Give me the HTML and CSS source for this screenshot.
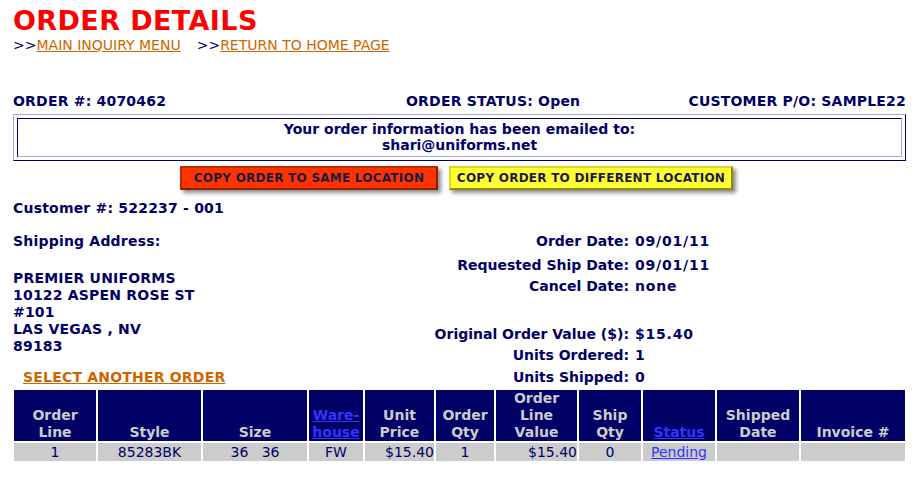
FILE: index.html
```html
<!DOCTYPE html>
<html>
<head>
<meta charset="utf-8">
<title>Order Details</title>
<link rel="stylesheet" href="styles.css">
</head>
<body>
<div class="page">
  <h1 class="title">ORDER DETAILS</h1>
  <div class="nav">&gt;&gt;<a href="#" class="navlink">MAIN INQUIRY MENU</a><span class="navgap"></span>&gt;&gt;<a href="#" class="navlink">RETURN TO HOME PAGE</a></div>

  <div class="header-row">
    <div class="h-order">ORDER #: 4070462</div>
    <div class="h-status">ORDER STATUS: Open</div>
    <div class="h-po">CUSTOMER P/O: SAMPLE22</div>
  </div>

  <div class="email-box">
    <div class="email-inner">Your order information has been emailed to:<br>shari@uniforms.net</div>
  </div>

  <div class="buttons">
    <span class="btn btn-red">COPY ORDER TO SAME LOCATION</span>
    <span class="btn btn-yellow">COPY ORDER TO DIFFERENT LOCATION</span>
  </div>

  <div class="info">
    <div class="left">
      <div class="customer">Customer #: 522237 - 001</div>
      <div class="ship-label">Shipping Address:</div>
      <div class="address">PREMIER UNIFORMS<br>10122 ASPEN ROSE ST<br>#101<br>LAS VEGAS , NV<br>89183</div>
      <a href="#" class="select-link">SELECT ANOTHER ORDER</a>
    </div>
    <div class="right">
      <div class="kv r1"><span class="k">Order Date:</span><span class="v">09/01/11</span></div>
      <div class="kv r2"><span class="k">Requested Ship Date:</span><span class="v">09/01/11</span></div>
      <div class="kv r3"><span class="k">Cancel Date:</span><span class="v">none</span></div>
      <div class="kv r4"><span class="k">Original Order Value ($):</span><span class="v">$15.40</span></div>
      <div class="kv r5"><span class="k">Units Ordered:</span><span class="v">1</span></div>
      <div class="kv r6"><span class="k">Units Shipped:</span><span class="v">0</span></div>
    </div>
  </div>

  <table class="lines">
    <colgroup>
      <col class="c1"><col class="c2"><col class="c3"><col class="c4"><col class="c5"><col class="c6"><col class="c7"><col class="c8"><col class="c9"><col class="c10"><col class="c11">
    </colgroup>
    <thead>
      <tr>
        <th>Order<br>Line</th>
        <th>Style</th>
        <th>Size</th>
        <th><a href="#" class="th-link">Ware-<br>house</a></th>
        <th>Unit<br>Price</th>
        <th>Order<br>Qty</th>
        <th>Order<br>Line<br>Value</th>
        <th>Ship<br>Qty</th>
        <th><a href="#" class="th-link">Status</a></th>
        <th>Shipped<br>Date</th>
        <th>Invoice #</th>
      </tr>
    </thead>
    <tbody>
      <tr>
        <td class="ctr">1</td>
        <td class="ctr">85283BK</td>
        <td class="ctr">36&nbsp;&nbsp;&nbsp;36</td>
        <td class="ctr">FW</td>
        <td class="rgt">$15.40</td>
        <td class="ctr">1</td>
        <td class="rgt">$15.40</td>
        <td class="ctr">0</td>
        <td class="ctr"><a href="#" class="td-link">Pending</a></td>
        <td></td>
        <td></td>
      </tr>
    </tbody>
  </table>
</div>
</body>
</html>
```

FILE: styles.css
```css
html, body {
  margin: 0;
  padding: 0;
  background: #ffffff;
}

body {
  font-family: "DejaVu Sans", Verdana, sans-serif;
  font-size: 14px;
  color: #000066;
}

.page {
  padding: 5px 15px 0 13px;
}

.title {
  margin: 0;
  font-size: 27px;
  line-height: 32px;
  letter-spacing: 0.4px;
  font-weight: bold;
  color: #ff0000;
}

.nav {
  font-size: 14px;
  line-height: 16px;
  color: #000066;
}

.navlink {
  color: #cc6600;
  text-decoration: underline;
}

.navgap {
  display: inline-block;
  width: 16px;
}

.header-row {
  display: grid;
  grid-template-columns: 393px auto 1fr;
  margin-top: 40px;
  font-weight: bold;
  line-height: 17px;
  letter-spacing: 0.2px;
}

.h-po {
  text-align: right;
}

.email-box {
  margin-top: 4px;
  border: 1px solid;
  border-color: #a8a8e0 #000066 #000066 #a8a8e0;
  padding: 3px;
}

.email-inner {
  border: 1px solid;
  border-color: #000066 #a8a8e0 #a8a8e0 #000066;
  text-align: center;
  font-weight: bold;
  line-height: 16px;
  padding: 2px 0 0;
  height: 35px;
}

.buttons {
  display: flex;
  justify-content: center;
  gap: 11px;
  margin-top: 5px;
  padding-right: 6px;
}

.btn {
  display: inline-block;
  box-sizing: border-box;
  height: 24px;
  line-height: 20px;
  font-size: 12px;
  letter-spacing: 0.24px;
  font-weight: bold;
  color: #1a1a40;
  text-align: center;
  border: 2px solid;
  box-shadow: 3px 3px 4px rgba(0, 0, 0, 0.45);
}

.btn-red {
  width: 258px;
  background: #ff3300;
  border-color: #c02800 #8a2000 #8a2000 #c02800;
}

.btn-yellow {
  width: 284px;
  background: #ffff33;
  border-color: #d8d820 #8a8a10 #8a8a10 #d8d820;
}

.info {
  display: flex;
  margin-top: 10px;
  font-weight: bold;
  letter-spacing: 0.2px;
}

.left {
  width: 413px;
  line-height: 17px;
}

.customer {
  height: 17px;
}

.ship-label {
  margin-top: 16px;
}

.address {
  margin-top: 20px;
}

.select-link {
  display: inline-block;
  margin-top: 14px;
  margin-left: 10px;
  color: #cc6600;
  text-decoration: underline;
  font-weight: bold;
}

.right {
  padding-top: 33px;
}

.kv {
  display: grid;
  grid-template-columns: 203px auto;
  column-gap: 6px;
  line-height: 17px;
}

.k {
  text-align: right;
  letter-spacing: 0;
}

.v {
  letter-spacing: 0.8px;
}

.r2 { margin-top: 7px; }
.r3 { margin-top: 4px; }
.r4 { margin-top: 31px; }
.r5 { margin-top: 4px; }
.r6 { margin-top: 5px; }

.lines {
  margin-top: 2px;
  margin-left: -1px;
  border-collapse: separate;
  border-spacing: 2px;
  table-layout: fixed;
  width: 895px;
}

.c1 { width: 82px; }
.c2 { width: 103px; }
.c3 { width: 104px; }
.c4 { width: 54px; }
.c5 { width: 69px; }
.c6 { width: 58px; }
.c7 { width: 81px; }
.c8 { width: 62px; }
.c9 { width: 72px; }
.c10 { width: 82px; }
.c11 { width: 104px; }

.lines th {
  background: #000066;
  color: #cccccc;
  font-weight: bold;
  vertical-align: bottom;
  text-align: center;
  padding: 0;
  line-height: 17px;
  height: 51px;
}

.th-link {
  color: #3333ff;
  text-decoration: underline;
}

.lines td {
  background: #cccccc;
  color: #000066;
  padding: 0;
  line-height: 18px;
  height: 18px;
  white-space: nowrap;
}

.ctr { text-align: center; }
.rgt { text-align: right; }

.td-link {
  color: #3333ff;
  text-decoration: underline;
}
```
